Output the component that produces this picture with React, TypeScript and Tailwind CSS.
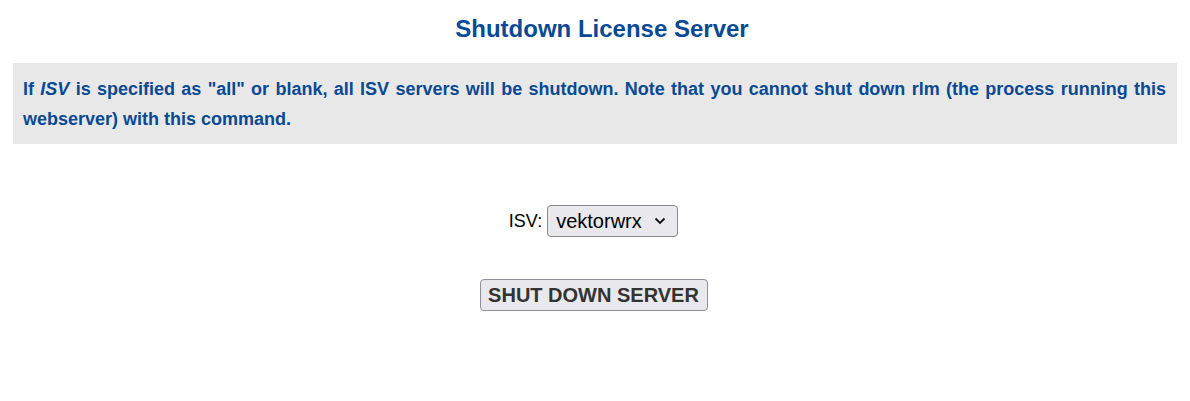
import React from "react";

export default function App() {
  return (
    <div className="w-[1190px] h-[401px] bg-white font-['Liberation_Sans',Arial,sans-serif]">
      <h1 className="text-center text-[24px] font-bold text-[#0a4a94] pt-[15px] pl-[14px] leading-[28px]">
        Shutdown License Server
      </h1>
      <div className="mx-[13px] mt-[20px] bg-[#e8e8e8] pl-[10px] pr-[11px] pt-[11px] pb-[10px]">
        <p className="text-[18px] font-bold leading-[30px] text-[#0a4a94] text-justify">
          If <i>ISV</i> is specified as "all" or blank, all ISV servers will be shutdown. Note that you cannot shut down rlm (the process running this webserver) with this command.
        </p>
      </div>
      <div className="flex flex-col items-center mt-[61px] pr-[3px]">
        <div className="flex items-center gap-[5px]">
          <span className="text-[18px] text-black">ISV:</span>
          <div className="flex items-center h-[32px] w-[131px] border border-[#8a8a8a] rounded-[4px] bg-[#e9e9ed] pl-[8px] pr-[11px] justify-between">
            <span className="text-[20px] text-black">vektorwrx</span>
            <svg width="12" height="8" viewBox="0 0 12 8">
              <path d="M1.5 1.5 L6 6 L10.5 1.5" fill="none" stroke="#111" strokeWidth="1.8" />
            </svg>
          </div>
        </div>
        <button className="mt-[42px] h-[32px] w-[228px] border border-[#8f8f9d] rounded-[4px] bg-[#e9e9ed] text-[20px] font-bold text-[#333] leading-none">
          SHUT DOWN SERVER
        </button>
      </div>
    </div>
  );
}
